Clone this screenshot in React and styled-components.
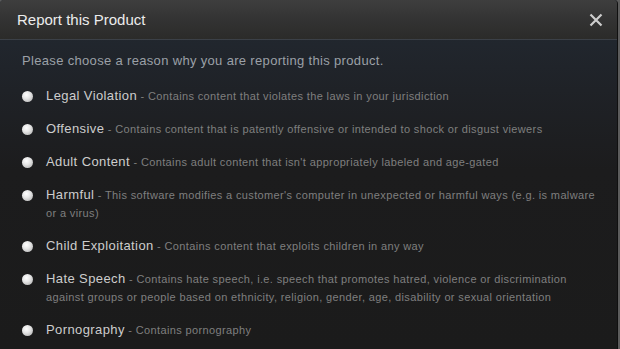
import React from "react";
import styled, { createGlobalStyle } from "styled-components";

const Global = createGlobalStyle`
  html, body { margin: 0; padding: 0; background: #5c5c5c; }
  body { font-family: "Liberation Sans", Arial, sans-serif; }
`;

const Dialog = styled.div`
  width: 618px;
  height: 349px;
  overflow: hidden;
  border-radius: 4px 4px 0 0;
  border-right: 1px solid #101010;
  box-sizing: border-box;
  background: linear-gradient(180deg, #232a33 0px, #1f2227 90px, #1c1c1d 170px, #1b1b1b 100%);
  display: flex;
  flex-direction: column;
`;

const Header = styled.div`
  height: 40px;
  flex: none;
  box-sizing: border-box;
  display: flex;
  align-items: center;
  justify-content: space-between;
  padding: 0 13px 0 17px;
  background: linear-gradient(180deg, #3e3e3e 0%, #333333 50%, #2b2b29 100%);
  border-bottom: 1px solid #3b4047;
`;

const Title = styled.div`
  color: #ececec;
  font-size: 15px;
`;

const Close = styled.button`
  background: none;
  border: 0;
  padding: 0;
  width: 16px;
  height: 16px;
  display: flex;
  cursor: pointer;
`;

const Body = styled.div`
  padding: 12px 18px 0 22px;
  letter-spacing: 0.33px;
`;

const Intro = styled.div`
  color: #9ba0a7;
  font-size: 13px;
  line-height: 18px;
  margin-bottom: 17px;
`;

const Row = styled.label`
  display: flex;
  align-items: flex-start;
  gap: 13px;
  margin-bottom: 15px;
  cursor: pointer;
`;

const Radio = styled.span`
  flex: none;
  width: 11px;
  height: 11px;
  margin-top: 4px;
  border-radius: 50%;
  background: radial-gradient(circle at 40% 35%, #ffffff 0%, #e6e6e6 40%, #a5a5a5 100%);
`;

const Text = styled.div`
  line-height: 18px;
  font-size: 11px;
  letter-spacing: 0.37px;
  color: #7f7f7f;
`;

const Label = styled.span`
  font-size: 13px;
  letter-spacing: 0.4px;
  color: #cdcdcd;
`;

const reasons = [
  ["Legal Violation", "Contains content that violates the laws in your jurisdiction"],
  ["Offensive", "Contains content that is patently offensive or intended to shock or disgust viewers"],
  ["Adult Content", "Contains adult content that isn't appropriately labeled and age-gated"],
  ["Harmful", "This software modifies a customer's computer in unexpected or harmful ways (e.g. is malware or a virus)"],
  ["Child Exploitation", "Contains content that exploits children in any way"],
  ["Hate Speech", "Contains hate speech, i.e. speech that promotes hatred, violence or discrimination against groups or people based on ethnicity, religion, gender, age, disability or sexual orientation"],
  ["Pornography", "Contains pornography"],
];

export default function App() {
  return (
    <>
      <Global />
      <Dialog>
        <Header>
          <Title>Report this Product</Title>
          <Close aria-label="Close">
            <svg width="16" height="16" viewBox="0 0 16 16">
              <path d="M2.5 2.5 L13.5 13.5 M13.5 2.5 L2.5 13.5" stroke="#cdcdcd" strokeWidth="2.2" strokeLinecap="butt" />
            </svg>
          </Close>
        </Header>
        <Body>
          <Intro>Please choose a reason why you are reporting this product.</Intro>
          {reasons.map(([label, desc]) => (
            <Row key={label}>
              <Radio />
              <Text>
                <Label>{label}</Label> - {desc}
              </Text>
            </Row>
          ))}
        </Body>
      </Dialog>
    </>
  );
}
